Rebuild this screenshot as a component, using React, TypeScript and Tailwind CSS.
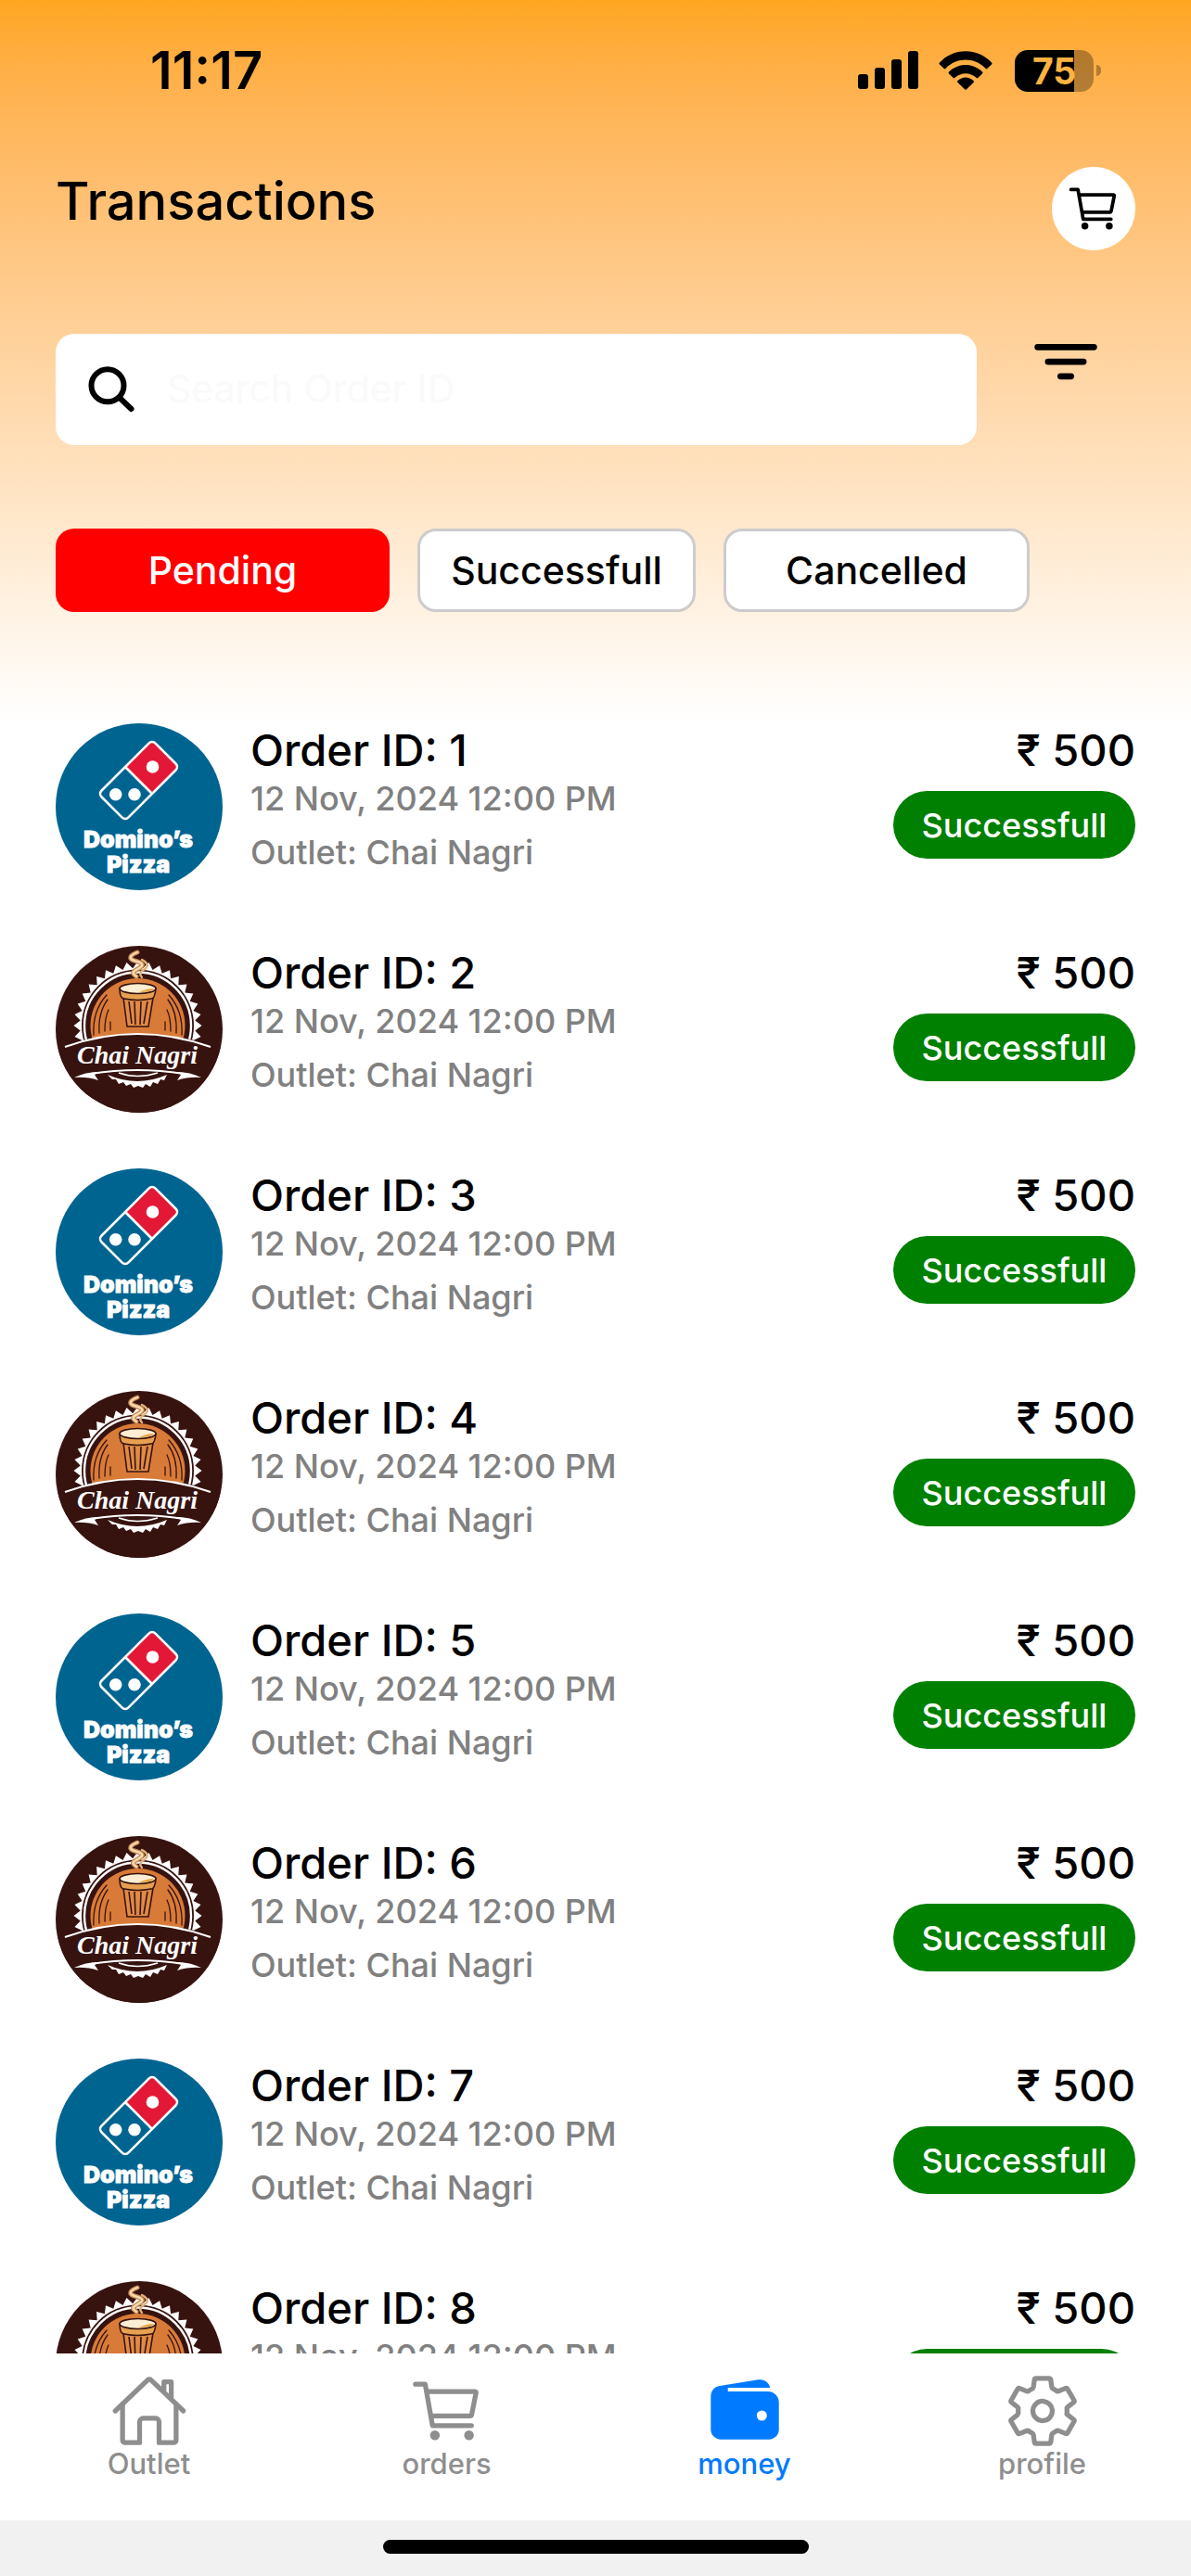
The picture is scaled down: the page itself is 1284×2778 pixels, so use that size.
import React, { useState } from 'react';
import { IoCartOutline, IoFilter, IoHomeOutline, IoSettingsOutline } from 'react-icons/io5';

interface Transaction {
  id: number;
  date: string;
  outlet: string;
  amount: number;
  status: string;
  brand: 'dominos' | 'chai';
}

const TRANSACTIONS: Transaction[] = Array.from({ length: 8 }, (_, index) => ({
  id: index + 1,
  date: '12 Nov, 2024 12:00 PM',
  outlet: 'Chai Nagri',
  amount: 500,
  status: 'Successfull',
  brand: index % 2 === 0 ? 'dominos' : 'chai',
}));

const FILTERS = [
  { label: 'Pending', width: 'w-[360px]' },
  { label: 'Successfull', width: 'w-[300px]' },
  { label: 'Cancelled', width: 'w-[330px]' },
];

// Outer edge of the toothed ring, as alternating tip / valley points
function ringPoints(cx: number, cy: number, outer: number, inner: number, teeth: number) {
  const points: string[] = [];
  for (let i = 0; i < teeth; i++) {
    const tip = (i / teeth) * Math.PI * 2;
    const valley = ((i + 0.5) / teeth) * Math.PI * 2;
    points.push(`${(cx + outer * Math.cos(tip)).toFixed(1)},${(cy + outer * Math.sin(tip)).toFixed(1)}`);
    points.push(`${(cx + inner * Math.cos(valley)).toFixed(1)},${(cy + inner * Math.sin(valley)).toFixed(1)}`);
  }
  return points.join(' ');
}

const RING = ringPoints(88.5, 86, 69, 62, 36);

function DominosLogo() {
  return (
    <svg viewBox="0 0 180 180" className="size-[180px] shrink-0 rounded-full" role="img" aria-label="Domino's Pizza">
      <rect width="180" height="180" fill="#006491" />
      <g transform="translate(89.5 61.5) rotate(45)">
        <path d="M-20.5 0v-36a5 5 0 0 1 5-5h31a5 5 0 0 1 5 5v36z" fill="#e31837" />
        <rect x="-20.5" y="-41" width="41" height="82" rx="5" fill="none" stroke="#fff" strokeWidth="2.6" />
        <path d="M-20.5 0h41" stroke="#fff" strokeWidth="2.6" />
      </g>
      <circle cx="104.5" cy="47" r="6.8" fill="#fff" />
      <circle cx="64.7" cy="76.7" r="6.8" fill="#fff" />
      <circle cx="85" cy="76.7" r="6.8" fill="#fff" />
      <g className="font-['Inter',sans-serif] font-black" fill="#fff" stroke="#fff" strokeWidth="0.8" textAnchor="middle" fontSize="25">
        <text x="89" y="134">Domino’s</text>
        <text x="89" y="161">Pizza</text>
      </g>
    </svg>
  );
}

function ChaiNagriLogo() {
  return (
    <svg viewBox="0 0 180 180" className="size-[180px] shrink-0 rounded-full" role="img" aria-label="Chai Nagri">
      <rect width="180" height="180" fill="#371310" />
      <polygon points={RING} fill="#fff" />
      <circle cx="88.5" cy="86" r="60.5" fill="#371310" />
      <circle cx="88.5" cy="86" r="57.5" fill="none" stroke="#fff" strokeWidth="2.4" />
      <circle cx="88.5" cy="86" r="51" fill="#d97b38" />
      {/* curtain folds either side of the glass */}
      <g fill="none" stroke="#371310" strokeWidth="1.3" strokeLinecap="round">
        <path d="M41 96c-1-18 4-32 14-43M47 94c-1-16 3-28 9-36M53 92c0-10 1-17 4-23M59 91v-9M136 96c1-18-4-32-14-43M130 94c1-16-3-28-9-36M124 92c0-10-1-17-4-23M118 91v-9" />
      </g>
      <path d="M0 120V110Q88 80 180 110V180H0z" fill="#371310" />
      {/* glass */}
      <path d="M73 56l4 31h23l5-31z" fill="#e08a45" stroke="#371310" strokeWidth="1.6" />
      <path d="M79 60l3 24M85 60l1 25M92 60l-1 25M99 60l-4 24" stroke="#371310" strokeWidth="1.6" />
      <path d="M69 46q0 11 5 11 14 3 29 0 4 0 5-11z" fill="#e6a050" stroke="#371310" strokeWidth="1.6" />
      <ellipse cx="88.5" cy="46" rx="19.5" ry="5.5" fill="#fdeed3" stroke="#371310" strokeWidth="1.6" />
      <path d="M90 50q8-4 16-4-2 4-16 4z" fill="#e8a33d" />
      {/* steam */}
      <path d="M88 7c-8 3-10 7-3 9s12 4 5 8-9 5-3 9" fill="none" stroke="#c98a55" strokeWidth="5" strokeLinecap="round" />
      <path d="M88 7c-8 3-10 7-3 9s12 4 5 8-9 5-3 9" fill="none" stroke="#f6dcae" strokeWidth="2.4" strokeLinecap="round" />
      <path d="M93 15c6 3 8 7 3 10s-6 6-3 9" fill="none" stroke="#e3b27b" strokeWidth="2.4" strokeLinecap="round" />
      {/* banner */}
      <path d="M10 109Q88 81 167 109" fill="none" stroke="#fff" strokeWidth="2.2" />
      <text
        x="88"
        y="127"
        className="font-['Liberation_Serif',serif] font-bold italic"
        fill="#fff"
        textAnchor="middle"
        fontSize="28"
      >
        Chai Nagri
      </text>
      <path d="M38 138Q88 130 138 138" fill="none" stroke="#fff" strokeWidth="2.2" />
      <path d="M20 142q12-6 26-6l-4 3 4 6q-12-4-26-3zM157 142q-12-6-26-6l4 3-4 6q12-4 26-3z" fill="#fff" />
      <path d="M56 139Q88 153 120 139l-3 6-4-1-3 5-5-2-3 5-5-3-3 4-5-2-5 2-3-4-5 2-3-4-5 2-3-5-4 0z" fill="#fff" />
      <path d="M68 137Q88 144 110 137" fill="none" stroke="#fff" strokeWidth="1.6" />
    </svg>
  );
}

function SearchIcon() {
  return (
    <svg viewBox="0 0 60 60" className="size-[60px] shrink-0" fill="none" stroke="#000" strokeWidth="6" strokeLinecap="round">
      <circle cx="26" cy="25.7" r="17.5" />
      <path d="M39 39l12.5 12" />
    </svg>
  );
}

function WalletIcon() {
  return (
    <svg viewBox="0 0 84 84" className="size-[84px]" fill="currentColor">
      <path d="M23.7 21H67a11.7 11.7 0 0 1 11.7 11.7V62A10.7 10.7 0 0 1 68 72.7H16A10.7 10.7 0 0 1 5.3 62V27C5.3 20 9 16 15 15L56.5 8.3C63 7.3 68 11 69.3 17H23.7z" />
      <circle cx="60.3" cy="47" r="5.5" fill="#fff" />
    </svg>
  );
}

function StatusBar() {
  return (
    <div className="flex h-[152px] items-center justify-between pl-[162px] pr-[97px]">
      <span className="text-[56px] leading-[60px] font-semibold">11:17</span>
      <div className="flex items-center">
        <svg viewBox="0 0 66 42" className="mr-[21px] h-[42px] w-[66px]">
          <rect x="0" y="25" width="11" height="16" rx="3" />
          <rect x="18" y="18" width="11" height="23" rx="3" />
          <rect x="36" y="9" width="11" height="32" rx="3" />
          <rect x="54" y="0" width="11" height="41" rx="3" />
        </svg>
        <svg viewBox="0 0 58 42" className="mr-6 h-[42px] w-[58px]">
          <path d="M1 12.5C16-3.8 42-3.8 57 12.5q1 1 0 2L52.5 18.8q-1 1-2 0C38.5 6.5 19.5 6.5 7.5 18.8q-1 1-2 0L1 14.5q-1-1 0-2z" />
          <path d="M11 22.5c10-10 26-10 36 0q1 1 0 2l-4.500 4.300q-1 1-2 0c-7-6-16-6-23 0q-1 1-2 0L11 24.500q-1-1 0-2z" />
          <path d="M20.5 32c5-4.7 12-4.7 17 0q1 1 0 2l-7.5 7.2q-1 1-2 0L20.500 34q-1-1 0-2z" />
        </svg>
        <div className="flex items-center gap-[3px]">
          <div className="flex h-[45px] w-[85px] items-center justify-center overflow-hidden rounded-[14px] bg-linear-to-r from-black from-75% to-black/30 to-75%">
            <span className="text-[39px] leading-[45px] font-bold text-[#ffb340]">75</span>
          </div>
          <span className="h-3 w-[5px] rounded-r-full bg-black/30" />
        </div>
      </div>
    </div>
  );
}

function TransactionRow({ item }: { item: Transaction }) {
  return (
    <li className="flex shrink-0 gap-[30px]">
      {item.brand === 'dominos' ? <DominosLogo /> : <ChaiNagriLogo />}
      <div className="min-w-0 flex-1">
        <h2 className="text-[47px] leading-[58px] font-medium">Order ID: {item.id}</h2>
        <p className="text-[36px] leading-[46px] font-medium text-[#808080]">{item.date}</p>
        <p className="mt-3 text-[36px] leading-[46px] font-medium text-[#808080]">Outlet: {item.outlet}</p>
      </div>
      <div className="flex flex-col items-end">
        <span className="text-[47px] leading-[58px] font-medium">₹ {item.amount}</span>
        <span className="mt-[15px] flex h-[73px] w-[261px] items-center justify-center rounded-full bg-[#008000] text-[36px] font-medium text-white">
          {item.status}
        </span>
      </div>
    </li>
  );
}

const TABS = [
  { label: 'Outlet', icon: <IoHomeOutline size={84} /> },
  { label: 'orders', icon: <IoCartOutline size={84} /> },
  { label: 'money', icon: <WalletIcon /> },
  { label: 'profile', icon: <IoSettingsOutline size={84} /> },
];

export default function App() {
  const [filter, setFilter] = useState('Pending');
  const [query, setQuery] = useState('');

  const visible = TRANSACTIONS.filter(item => String(item.id).includes(query.trim()));

  return (
    <div className="flex h-screen flex-col overflow-hidden bg-white font-['Inter','Noto_Sans',sans-serif] text-black">
      <header className="shrink-0 bg-linear-to-b from-[#ffa61f] to-white pb-[120px]">
        <StatusBar />
        <div className="flex items-start justify-between px-[60px] pt-7">
          <h1 className="text-[56px] leading-[74px] font-medium">Transactions</h1>
          <button type="button" aria-label="Cart" className="flex size-[90px] items-center justify-center rounded-full bg-white">
            <IoCartOutline size={60} />
          </button>
        </div>

        <div className="mt-[90px] flex items-start gap-[21px] px-[60px]">
          <label className="flex h-[120px] flex-1 items-center gap-[30px] rounded-[20px] bg-white px-[30px]">
            <SearchIcon />
            <input
              type="text"
              aria-label="Search Order ID"
              placeholder="Search Order ID"
              value={query}
              onChange={e => setQuery(e.target.value)}
              className="min-w-0 flex-1 bg-transparent text-[41px] outline-none placeholder:text-[#fafafa]"
            />
          </label>
          <button type="button" aria-label="Filter" className="flex h-[60px] w-[150px] items-center justify-center">
            <IoFilter size={72} className="shrink-0" />
          </button>
        </div>

        <div className="mt-[90px] flex gap-[30px] px-[60px]">
          {FILTERS.map(({ label, width }) => (
            <button
              key={label}
              type="button"
              aria-pressed={filter === label}
              onClick={() => setFilter(label)}
              className={`h-[90px] rounded-[20px] text-[41px] leading-[60px] font-medium ${width} ${
                filter === label ? 'bg-[#ff0000] text-white' : 'border-[3px] border-[#cccccc] bg-white'
              }`}
            >
              {label}
            </button>
          ))}
        </div>
      </header>

      <ul className="flex min-h-0 flex-1 flex-col gap-[60px] overflow-hidden px-[60px]">
        {visible.map(item => (
          <TransactionRow key={item.id} item={item} />
        ))}
      </ul>

      <nav className="grid h-[180px] shrink-0 grid-cols-4 bg-white pt-5">
        {TABS.map(({ label, icon }) => (
          <a
            key={label}
            href={`#${label}`}
            className={`flex flex-col items-center text-[31px] leading-[30px] font-medium ${
              label === 'money' ? 'text-[#007aff]' : 'text-[#8e8e8f]'
            }`}
          >
            {icon}
            <span>{label}</span>
          </a>
        ))}
      </nav>
      <div className="flex h-[60px] shrink-0 justify-center bg-[#f1f1f1] pt-[21px]">
        <span className="h-[15px] w-[459px] rounded-full bg-black" />
      </div>
    </div>
  );
}
